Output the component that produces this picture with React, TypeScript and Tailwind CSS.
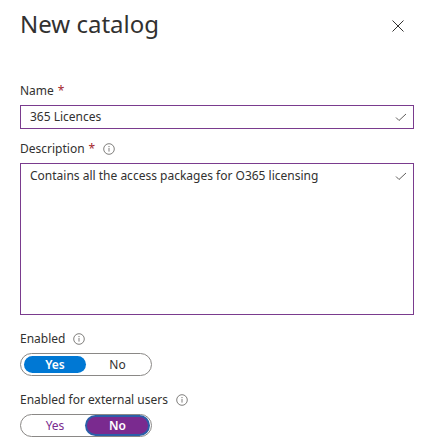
import React from "react";

const font = { fontFamily: '"Segoe UI", "Noto Sans", "Open Sans", sans-serif' };

function InfoIcon() {
  return (
    <svg width="12" height="12" viewBox="0 0 12 12" className="text-[#605e5c]">
      <circle cx="6" cy="6" r="5.3" fill="none" stroke="currentColor" strokeWidth="0.8" />
      <circle cx="6" cy="3.6" r="0.55" fill="currentColor" />
      <rect x="5.6" y="5" width="0.8" height="3.6" fill="currentColor" />
    </svg>
  );
}

function Check() {
  return (
    <svg width="12" height="9" viewBox="0 0 12 9" className="shrink-0">
      <path d="M1 4.5 L4 7.5 L11 1" fill="none" stroke="#605e5c" strokeWidth="1" />
    </svg>
  );
}

function Label({ text, required, info }: { text: string; required?: boolean; info?: boolean }) {
  return (
    <div className="flex items-center text-[12px] leading-4 text-[#323130]">
      <span>{text}</span>
      {required && <span className="ml-1 text-[#a4262c]">*</span>}
      {info && (
        <span className="ml-2 flex">
          <InfoIcon />
        </span>
      )}
    </div>
  );
}

function Toggle({ value, accent }: { value: boolean; accent: "blue" | "purple" }) {
  const on =
    accent === "blue"
      ? "bg-[#0078d4] text-white font-semibold"
      : "bg-[#7a2a8f] text-white font-semibold ring-2 ring-[#2b5ea8]";
  const off = accent === "blue" ? "text-[#323130]" : "text-[#7a2a8f]";
  return (
    <div className="flex h-[23px] w-[132px] items-center rounded-full border border-[#8a8886] px-[3px] py-[2px] text-[12px]">
      <div className={`flex h-[17px] w-[62px] items-center justify-center rounded-full ${value ? on : off}`}>Yes</div>
      <div className={`ml-[1px] flex h-[17px] w-[61px] items-center justify-center rounded-full ${!value ? on : off}`}>No</div>
    </div>
  );
}

export default function App() {
  return (
    <div className="h-[445px] w-[430px] bg-white px-5 text-[#323130]" style={font}>
      <div className="flex items-start justify-between pt-[8px]">
        <h1 className="text-[24px] font-normal leading-8">New catalog</h1>
        <svg width="12" height="12" viewBox="0 0 12 12" className="mr-[6px] mt-[12px]">
          <path d="M0.5 0.5 L11.5 11.5 M11.5 0.5 L0.5 11.5" stroke="#323130" strokeWidth="1" />
        </svg>
      </div>

      <div className="mt-[43px]">
        <Label text="Name" required />
        <div className="mt-[6px] flex h-[24px] w-[394px] items-center justify-between border border-[#7a3b8e] pl-[9px] pr-[6px] text-[12px]">
          <span>365 Licences</span>
          <Check />
        </div>
      </div>

      <div className="mt-[12px]">
        <Label text="Description" required info />
        <div className="mt-[6px] flex h-[152px] w-[394px] items-start justify-between border border-[#7a3b8e] pl-[9px] pr-[6px] pt-[3px] text-[12px]">
          <span>Contains all the access packages for O365 licensing</span>
          <span className="mt-[5px] flex">
            <Check />
          </span>
        </div>
      </div>

      <div className="mt-[16px]">
        <Label text="Enabled" info />
        <div className="mt-[6px]">
          <Toggle value={true} accent="blue" />
        </div>
      </div>

      <div className="mt-[16px]">
        <Label text="Enabled for external users" info />
        <div className="mt-[6px]">
          <Toggle value={false} accent="purple" />
        </div>
      </div>
    </div>
  );
}
